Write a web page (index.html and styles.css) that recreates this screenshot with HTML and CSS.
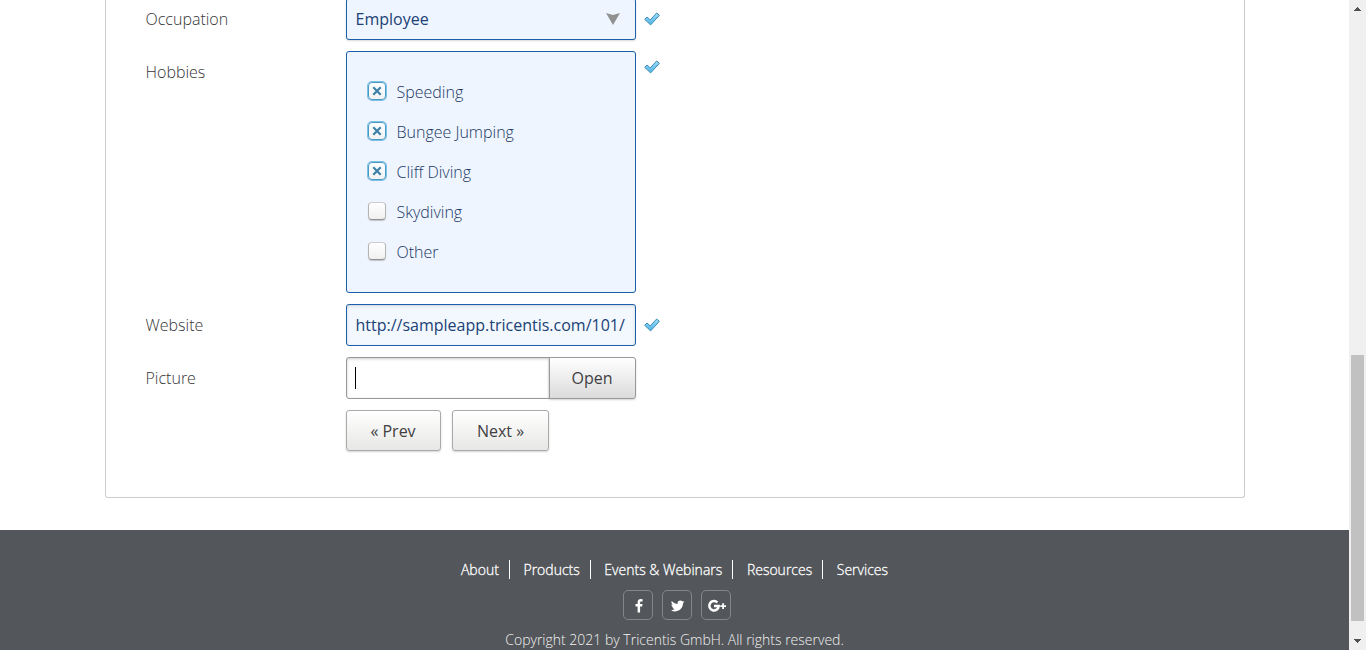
FILE: index.html
```html
<!DOCTYPE html>
<html lang="en">
<head>
<meta charset="utf-8">
<title>Enter Insurant Data</title>
<link rel="stylesheet" href="styles.css">
</head>
<body>
<svg class="defs" aria-hidden="true">
  <defs>
    <linearGradient id="tick-fill" x1="0" y1="0" x2="0" y2="1">
      <stop offset="0" stop-color="#9edcf8"/>
      <stop offset="1" stop-color="#4fb2e2"/>
    </linearGradient>
    <symbol id="tick" viewBox="0 0 16 14">
      <path d="M.7 7.3 3 5 6.2 7.9 12.7 1 15.4 3.3 6.6 12.9Z" fill="url(#tick-fill)" stroke="#3c8db8" stroke-width="1" stroke-linejoin="round"/>
    </symbol>
    <symbol id="cross" viewBox="0 0 10 10">
      <path d="M1.3 1.3 8.7 8.7M8.7 1.3 1.3 8.7" stroke="#3b80a8" stroke-width="2.2"/>
    </symbol>
  </defs>
</svg>
<div class="window">
  <div class="page">
    <main class="panel">
      <form class="form">
        <div class="row">
          <span class="label">Occupation</span>
          <div class="field select">
            <span>Employee</span>
            <svg class="arrow" viewBox="0 0 14 12"><path d="M0 0 7 2 14 0 7 12Z" fill="#919191"/></svg>
          </div>
          <svg class="tick"><use href="#tick"/></svg>
        </div>
        <div class="row row-top">
          <span class="label">Hobbies</span>
          <div class="field group">
            <div class="option"><span class="box checked"><svg class="cross"><use href="#cross"/></svg></span><span>Speeding</span></div>
            <div class="option"><span class="box checked"><svg class="cross"><use href="#cross"/></svg></span><span>Bungee Jumping</span></div>
            <div class="option"><span class="box checked"><svg class="cross"><use href="#cross"/></svg></span><span>Cliff Diving</span></div>
            <div class="option"><span class="box"></span><span>Skydiving</span></div>
            <div class="option"><span class="box"></span><span>Other</span></div>
          </div>
          <svg class="tick tick-group"><use href="#tick"/></svg>
        </div>
        <div class="row">
          <span class="label">Website</span>
          <div class="field website">http://sampleapp.tricentis.com/101/</div>
          <svg class="tick"><use href="#tick"/></svg>
        </div>
        <div class="row">
          <span class="label">Picture</span>
          <div class="picker">
            <div class="file"><span class="caret"></span></div>
            <div class="open">Open</div>
          </div>
        </div>
        <div class="actions">
          <div class="button prev">« Prev</div>
          <div class="button next">Next »</div>
        </div>
      </form>
    </main>
    <footer class="footer">
      <nav class="links">
        <a>About</a><a>Products</a><a>Events &amp; Webinars</a><a>Resources</a><a>Services</a>
      </nav>
      <div class="social">
        <a class="social-link"><svg class="facebook" viewBox="0 0 8 14"><path d="M7.6.2V2.4H6.3C5.3 2.4 5.1 2.9 5.1 3.6V5.1H7.5L7.2 7.5H5.1V13.6H2.6V7.5H.5V5.1H2.6V3.3C2.6 1.2 3.9.1 5.8.1Z"/></svg></a>
        <a class="social-link"><svg class="twitter" viewBox="0 0 14 12"><path d="M13.4 1.8C13 2.4 12.5 2.9 12 3.2V3.6C12 7.2 9.2 11.4 4.2 11.4 2.7 11.4 1.2 11 0 10.2 1.5 10.3 2.9 9.9 4 9.1 2.8 9.1 1.7 8.3 1.4 7.2 1.8 7.3 2.3 7.2 2.6 7.1 1.3 6.9.4 5.7.4 4.4.8 4.6 1.2 4.7 1.7 4.7.5 3.9 0 2.3.8 1.1 2.2 2.8 4.3 3.9 6.6 4 6.2 2.2 7.4.5 9.3.5 10.1.5 10.8.8 11.3 1.3 12 1.2 12.5 1 13.1.7 12.9 1.3 12.5 1.8 11.9 2.2 12.4 2.2 12.9 2 13.4 1.8Z"/></svg></a>
        <a class="social-link"><svg class="google" viewBox="0 0 20 14"><path fill="none" stroke="#fff" stroke-width="2.5" d="M10.4 3.5A4.7 4.7 0 1 0 11.7 7.1H7"/><path d="M15.2 4.3H17V6.2H19V8H17V9.9H15.2V8H13.3V6.2H15.2Z"/></svg></a>
      </div>
      <p class="copyright">Copyright 2021 by Tricentis GmbH. All rights reserved.</p>
    </footer>
  </div>
  <div class="scrollbar">
    <svg class="scroll-arrow" viewBox="0 0 7 4" shape-rendering="crispEdges"><path d="M3 0H4V1H5V2H6V3H7V4H0V3H1V2H2V1H3Z"/></svg>
    <div class="thumb"></div>
    <svg class="scroll-arrow" viewBox="0 0 7 4" shape-rendering="crispEdges"><path d="M0 0H7V1H6V2H5V3H4V4H3V3H2V2H1V1H0Z"/></svg>
  </div>
</div>
</body>
</html>
```

FILE: styles.css
```css
* { box-sizing: border-box; }
body {
  margin: 0;
  overflow: hidden;
  background: #fff;
  color: #363537;
  font: 300 16px/22px "Open Sans", sans-serif;
}
svg { display: block; flex: none; }
.defs { position: absolute; width: 0; height: 0; }
.window { display: flex; height: 650px; }
.page { width: 1349px; height: 650px; overflow: hidden; }
.panel {
  width: 1140px;
  height: 498px;
  margin: 0 0 32px 105px;
  border: 1px solid #ccc;
  border-top: 0;
  border-radius: 0 0 3px 3px;
  overflow: hidden;
}
.form {
  display: flex;
  flex-direction: column;
  gap: 11px;
  margin-top: -2px;
  padding-left: 39.5px;
}
.row { display: flex; align-items: center; }
.row-top { align-items: flex-start; }
.label { width: 200.5px; }
.row-top .label { padding-top: 10px; }
.field {
  width: 290px;
  height: 42px;
  border: 1px solid #1b5faa;
  border-radius: 3px;
  background: #eef5fe;
  color: #204176;
}
.select {
  display: flex;
  align-items: center;
  justify-content: space-between;
  padding: 0 15px 0 8.5px;
  font-weight: 400;
  box-shadow: 0 1px 2px rgba(0, 0, 0, .15);
}
.arrow { width: 14px; height: 12px; }
.tick { width: 16px; height: 14px; margin-left: 8px; }
.tick-group { margin-top: 9px; }
.group { height: 242px; padding: 20px; color: #1a3767; }
.option { display: flex; align-items: center; height: 40px; }
.box {
  width: 18px;
  height: 18px;
  margin: 0 10.5px 2px 1px;
  border: 1px solid #b4b4b4;
  border-top-color: #ccc;
  border-bottom-color: #929292;
  border-radius: 4px;
  background: linear-gradient(#fff, #f0f0f0);
  box-shadow: 0 1px 1px rgba(0, 0, 0, .2);
}
.checked {
  display: flex;
  align-items: center;
  justify-content: center;
  border-color: #459ccb;
  background: linear-gradient(#fff, #f2f2f2);
  box-shadow: 0 0 0 1px #7fbfe0;
}
.cross { width: 10px; height: 10px; }
.website {
  padding: 9px 8.5px;
  background: #f2f8fd;
  font-weight: 400;
  white-space: nowrap;
  box-shadow: inset 0 1px 3px rgba(0, 0, 0, .15);
}
.picker { display: flex; height: 42px; }
.file {
  width: 204px;
  padding: 9px 8px;
  border: 1px solid #999;
  border-radius: 3px 0 0 3px;
  box-shadow: inset 0 1px 3px rgba(0, 0, 0, .2);
}
.caret { display: block; width: 1px; height: 22px; background: #000; }
.open, .button {
  border: 1px solid #aaa;
  background: linear-gradient(#fff, #e7e7e5);
  box-shadow: 0 1px 2px rgba(0, 0, 0, .18);
  color: #414042;
  font-weight: 400;
  text-align: center;
}
.open {
  width: 87px;
  margin-left: -1px;
  padding: 9px 1px 9px 0;
  border-color: #999;
  border-radius: 0 3px 3px 0;
  background: linear-gradient(#fff, #dbdbdb);
}
.actions { display: flex; gap: 11px; padding-left: 200.5px; }
.button { height: 41px; padding-top: 9px; border-radius: 3px; }
.prev { width: 95px; padding-right: 1px; }
.next { width: 97px; }
.footer {
  height: 140px;
  padding-top: 30px;
  background: #53565a;
  color: #fff;
}
.links {
  display: flex;
  justify-content: center;
  font-size: 14px;
  line-height: 19px;
  -webkit-text-stroke: .3px #fff;
}
.links a { padding: 0 10px 0 13.6px; border-right: 1px solid #fff; }
.links a:first-child { padding-left: 0; }
.links a:last-child { padding-right: 0; border: 0; }
.social { display: flex; justify-content: center; gap: 9px; margin: 11px 0; padding-left: 5px; }
.social-link {
  display: flex;
  align-items: center;
  justify-content: center;
  width: 30px;
  height: 30px;
  padding: 1px 0 0 1px;
  border: 1px solid #838587;
  border-radius: 5px;
}
.social svg { fill: #fff; }
.facebook { width: 8px; height: 14px; }
.twitter { width: 14px; height: 12px; }
.google { width: 20px; height: 14px; }
.copyright {
  margin: 0;
  color: #f2f2f2;
  font-size: 14px;
  line-height: 18px;
  text-align: center;
}
.scrollbar {
  display: flex;
  flex-direction: column;
  align-items: center;
  width: 17px;
  padding: 7px 0 7px;
  background: #f0f0f0;
}
.scroll-arrow { width: 7px; height: 4px; fill: #505050; }
.thumb { width: 13px; height: 266px; margin: 344px 0 18px; background: #c1c1c1; }
```
